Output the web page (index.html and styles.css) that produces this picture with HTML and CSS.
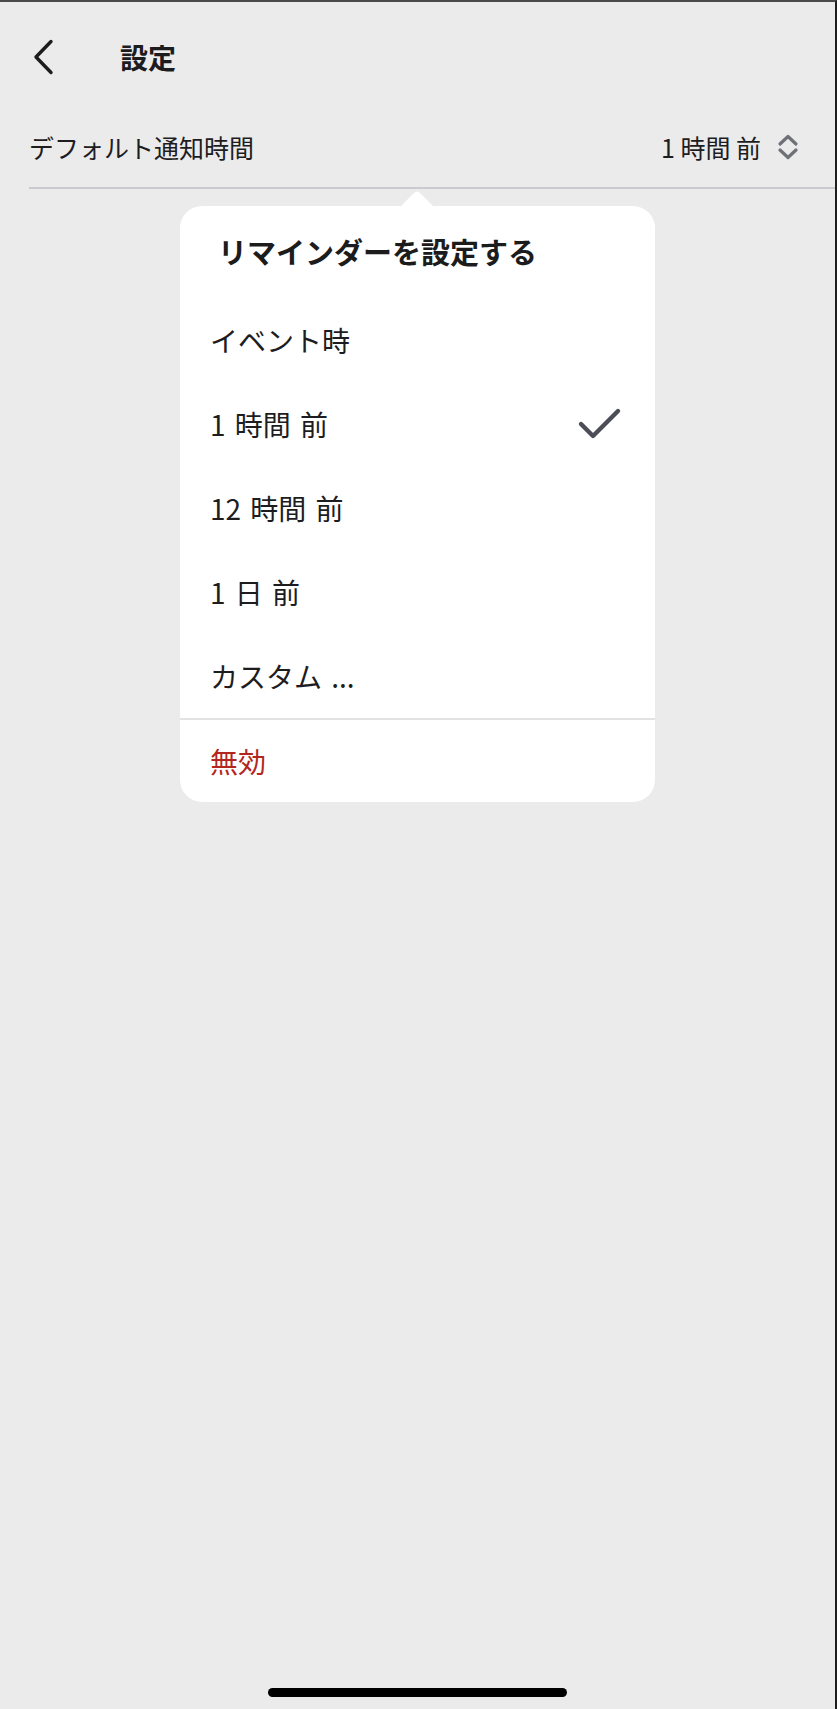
FILE: index.html
```html
<!DOCTYPE html>
<html lang="ja">
<head>
   <meta charset="utf-8">
   <title>設定</title>
   <link rel="stylesheet" href="styles.css">
</head>
<body>
<div id="screen">
   <div class="nav">
      <svg class="back" width="22" height="36" viewBox="0 0 22 36"><polyline points="19,2.5 4,18 19,33.5" fill="none" stroke="#1c1c1e" stroke-width="3.4" stroke-linecap="round" stroke-linejoin="round"/></svg>
      <h1 class="nav-title">設定</h1>
   </div>

   <div class="row">
      <span class="row-label">デフォルト通知時間</span>
      <span class="row-value">
         1 時間 前
         <svg class="updown" width="22" height="26" viewBox="0 0 22 26"><polyline points="3,10 11,2.5 19,10" fill="none" stroke="#6e7178" stroke-width="3.2" stroke-linecap="round" stroke-linejoin="round"/><polyline points="3,16 11,23.5 19,16" fill="none" stroke="#6e7178" stroke-width="3.2" stroke-linecap="round" stroke-linejoin="round"/></svg>
      </span>
   </div>

   <div class="popover">
      <svg class="arrow" width="34" height="17" viewBox="0 0 34 17"><path d="M0 17 L14 3 Q17 0 20 3 L34 17 Z" fill="#fff"/></svg>
      <div class="pop-title">リマインダーを設定する</div>
      <div class="pop-item">イベント時</div>
      <div class="pop-item">
         <span>1 時間 前</span>
         <svg class="check" width="46" height="34" viewBox="0 0 46 34"><polyline points="4,17 16,29 41,4" fill="none" stroke="#4b4e56" stroke-width="4.4" stroke-linecap="round" stroke-linejoin="round"/></svg>
      </div>
      <div class="pop-item">12 時間 前</div>
      <div class="pop-item">1 日 前</div>
      <div class="pop-item">カスタム ...</div>
      <div class="pop-item off">無効</div>
   </div>

   <div class="spacer"></div>
   <div class="home"></div>
</div>
</body>
</html>
```

FILE: styles.css
```css
* { margin: 0; padding: 0; box-sizing: border-box; }
html, body { background: #ebebeb; }
body { font-family: "Noto Sans CJK JP", "Noto Sans", sans-serif; color: #1d1d1f; }

#screen {
   width: 837px;
   height: 1709px;
   border-top: 2px solid #4a4a4a;
   border-right: 2px solid #1e1e1e;
   display: flex;
   flex-direction: column;
}

.nav { height: 110px; display: flex; align-items: center; padding-left: 32px; }
.nav .back { display: block; }
.nav-title { font-size: 28px; font-weight: 700; margin-left: 66px; line-height: 1; color: #1c1c1e; }

.row {
   margin-left: 29px;
   height: 77px;
   padding-bottom: 6px;
   padding-right: 36px;
   display: flex;
   align-items: center;
   justify-content: space-between;
   border-bottom: 2px solid #cbcbcf;
   font-size: 25px;
}
.row-value { display: flex; align-items: center; }
.updown { margin-left: 16px; }

.popover {
   position: relative;
   margin-top: 17px;
   margin-left: 180px;
   width: 475px;
   background: #fff;
   border-radius: 22px;
}
.popover .arrow { position: absolute; top: -16px; left: 220px; display: block; }

.pop-title { height: 92px; padding-left: 38px; padding-bottom: 2px; display: flex; align-items: center; font-size: 29px; font-weight: 700; color: #1c1c1c; }
.pop-item { height: 84px; padding-left: 30px; padding-right: 32px; display: flex; align-items: center; justify-content: space-between; font-size: 28px; word-spacing: 3px; }
.pop-item.off { height: 84px; border-top: 2px solid #e2e2e4; color: #b3261e; }

.spacer { flex: 1; }
.home { width: 299px; height: 9px; margin: 0 0 12px 268px; background: #000; border-radius: 5px; }
```
